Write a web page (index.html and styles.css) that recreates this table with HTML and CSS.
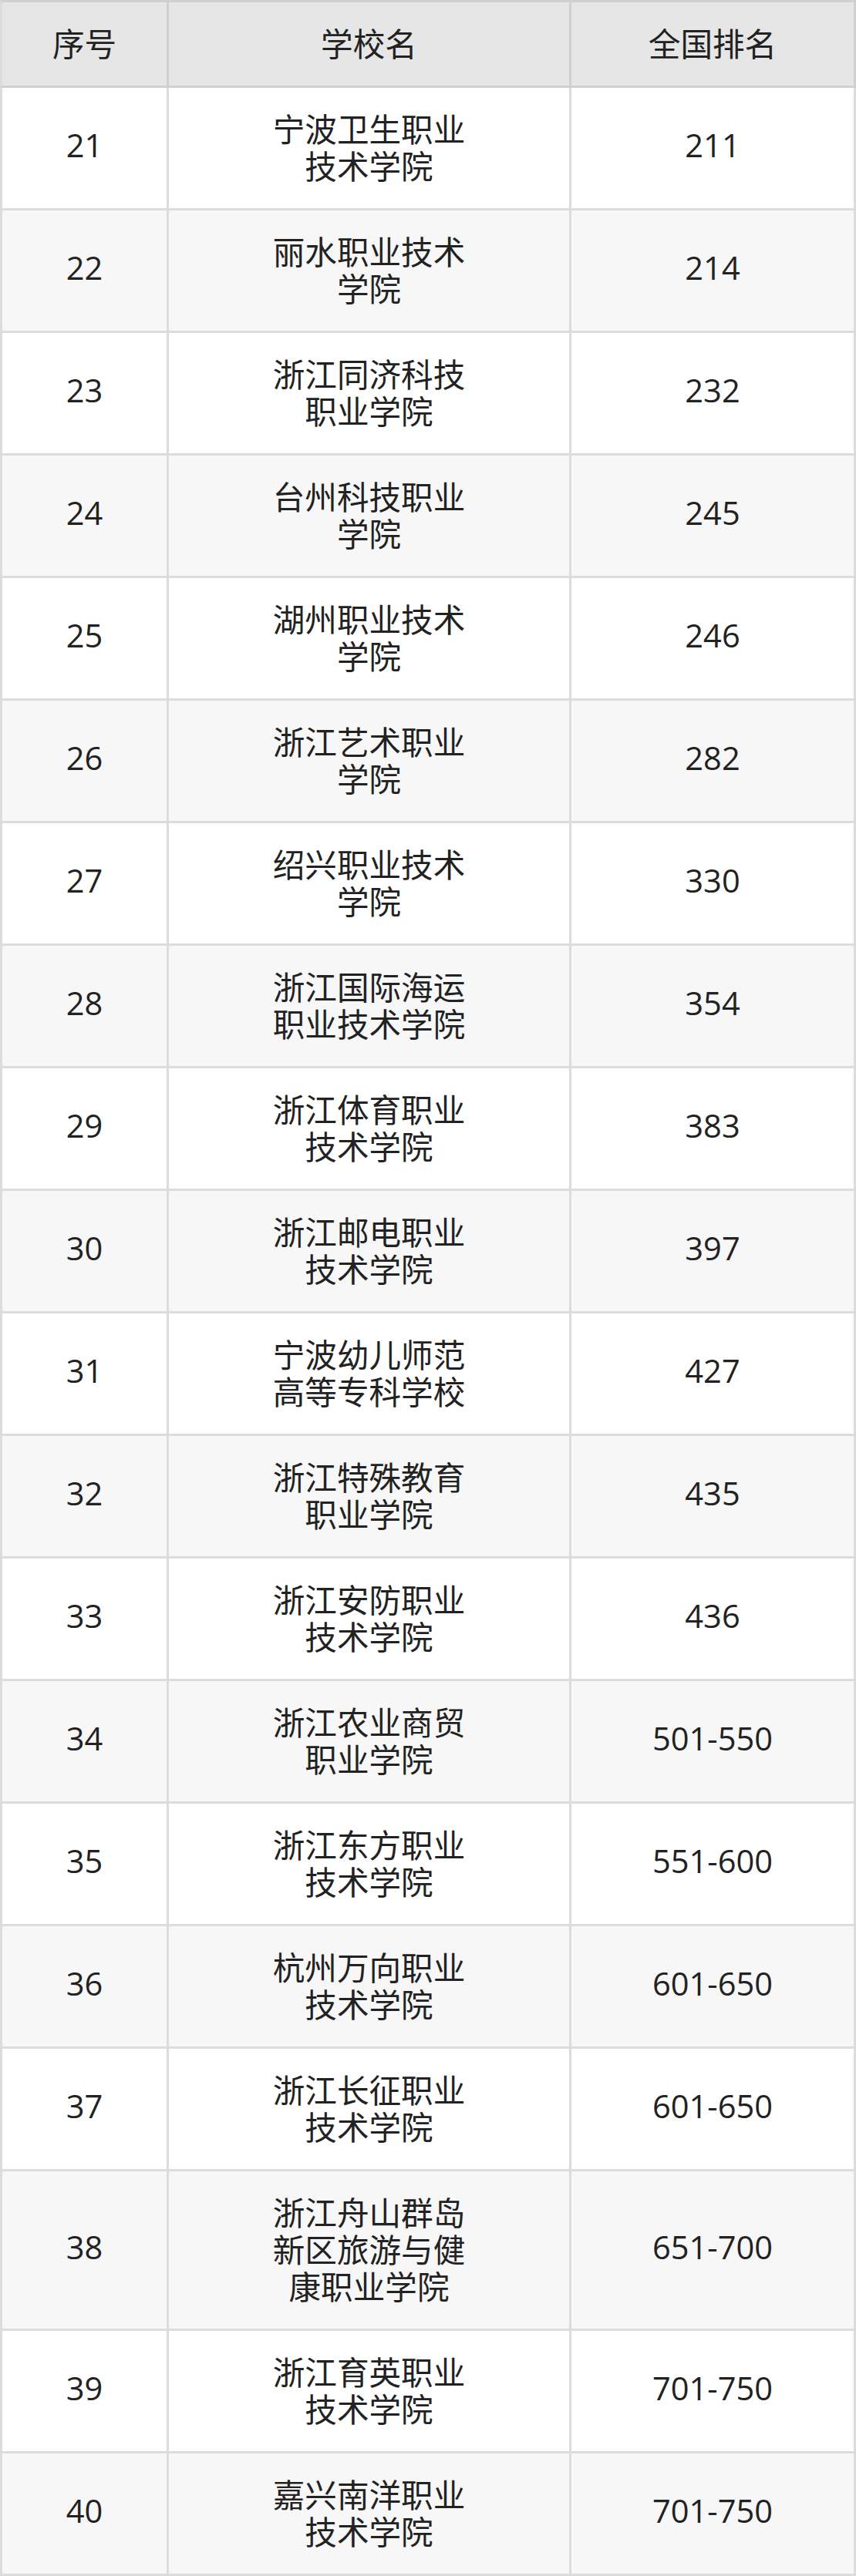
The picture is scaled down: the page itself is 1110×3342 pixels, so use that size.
FILE: index.html
```html
<!DOCTYPE html>
<html lang="zh-CN">
<head>
<meta charset="utf-8">
<title>浙江高职院校排名</title>
<link rel="stylesheet" href="styles.css">
</head>
<body>
<table class="rank">
  <colgroup>
    <col class="c-no">
    <col class="c-name">
    <col class="c-rank">
  </colgroup>
  <thead>
    <tr><th class="first cjk">序号</th><th class="name cjk">学校名</th><th class="cjk">全国排名</th></tr>
  </thead>
  <tbody>
    <tr><td class="first num">21</td><td class="name cjk">宁波卫生职业技术学院</td><td class="num">211</td></tr>
    <tr><td class="first num">22</td><td class="name cjk">丽水职业技术学院</td><td class="num">214</td></tr>
    <tr><td class="first num">23</td><td class="name cjk">浙江同济科技职业学院</td><td class="num">232</td></tr>
    <tr><td class="first num">24</td><td class="name cjk">台州科技职业学院</td><td class="num">245</td></tr>
    <tr><td class="first num">25</td><td class="name cjk">湖州职业技术学院</td><td class="num">246</td></tr>
    <tr><td class="first num">26</td><td class="name cjk">浙江艺术职业学院</td><td class="num">282</td></tr>
    <tr><td class="first num">27</td><td class="name cjk">绍兴职业技术学院</td><td class="num">330</td></tr>
    <tr><td class="first num">28</td><td class="name cjk">浙江国际海运职业技术学院</td><td class="num">354</td></tr>
    <tr><td class="first num">29</td><td class="name cjk">浙江体育职业技术学院</td><td class="num">383</td></tr>
    <tr><td class="first num">30</td><td class="name cjk">浙江邮电职业技术学院</td><td class="num">397</td></tr>
    <tr><td class="first num">31</td><td class="name cjk">宁波幼儿师范高等专科学校</td><td class="num">427</td></tr>
    <tr><td class="first num">32</td><td class="name cjk">浙江特殊教育职业学院</td><td class="num">435</td></tr>
    <tr><td class="first num">33</td><td class="name cjk">浙江安防职业技术学院</td><td class="num">436</td></tr>
    <tr><td class="first num">34</td><td class="name cjk">浙江农业商贸职业学院</td><td class="num">501-550</td></tr>
    <tr><td class="first num">35</td><td class="name cjk">浙江东方职业技术学院</td><td class="num">551-600</td></tr>
    <tr><td class="first num">36</td><td class="name cjk">杭州万向职业技术学院</td><td class="num">601-650</td></tr>
    <tr><td class="first num">37</td><td class="name cjk">浙江长征职业技术学院</td><td class="num">601-650</td></tr>
    <tr><td class="first num">38</td><td class="name cjk">浙江舟山群岛新区旅游与健康职业学院</td><td class="num">651-700</td></tr>
    <tr><td class="first num">39</td><td class="name cjk">浙江育英职业技术学院</td><td class="num">701-750</td></tr>
    <tr><td class="first num">40</td><td class="name cjk">嘉兴南洋职业技术学院</td><td class="num">701-750</td></tr>
  </tbody>
</table>
</body>
</html>
```
FILE: styles.css
```css
html, body {
  margin: 0;
  padding: 0;
  background: #ffffff;
}

.rank {
  width: 1110px;
  border-collapse: separate;
  border-spacing: 0;
  table-layout: fixed;
  font-family: "Open Sans", "Noto Sans CJK SC", sans-serif;
  font-size: 41.6px;
  line-height: 48px;
  color: #222222;
}

.c-no { width: 219px; }
.c-name { width: 522px; }
.c-rank { width: 369px; }

.rank th,
.rank td {
  border-right: 3px solid #dcdcdc;
  border-bottom: 3px solid #dcdcdc;
  padding: 28px 8px 32px;
  text-align: center;
  vertical-align: middle;
  font-weight: normal;
}

.rank .first {
  border-left: 3px solid #dcdcdc;
}

.rank .cjk {
  font-family: "Noto Sans CJK SC", "Open Sans", sans-serif;
}

.rank td.num {
  padding-top: 26px;
  padding-bottom: 34px;
}

.rank th.name,
.rank td.name {
  padding-left: 128px;
  padding-right: 128px;
}

.rank thead th {
  background: #e6e6e6;
  border-color: #d0d0d0;
  border-top: 3px solid #d0d0d0;
}

.rank tbody tr:nth-child(odd) td {
  background: #ffffff;
}

.rank tbody tr:nth-child(even) td {
  background: #f7f7f7;
}
```
